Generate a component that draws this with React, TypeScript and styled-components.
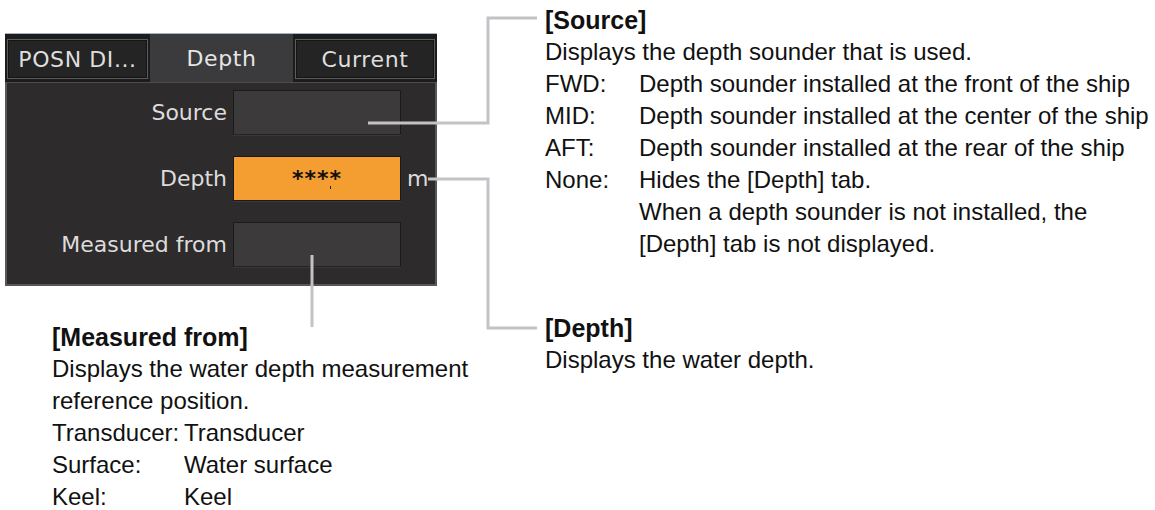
import React from "react";
import styled, { createGlobalStyle } from "styled-components";

const GlobalStyle = createGlobalStyle`
  * { box-sizing: border-box; }
  html, body { margin: 0; padding: 0; background: #ffffff; }
  body { font-family: "Liberation Sans", Arial, sans-serif; color: #111111; }
`;

const Page = styled.div`
  position: relative;
  width: 1155px;
  height: 510px;
  display: flex;
  padding-left: 5px;
  overflow: hidden;
`;

const LeftColumn = styled.div`
  width: 432px;
  display: flex;
  flex-direction: column;
`;

const RightColumn = styled.div`
  margin-left: 108px;
  padding-top: 4px;
  display: flex;
  flex-direction: column;
`;

/* ---------- dark ECDIS panel ---------- */

const Panel = styled.div`
  margin-top: 33px;
  border-top: 1px solid #a6b4c2;
  background: #1d1c1d;
  font-family: "DejaVu Sans", Verdana, sans-serif;
  font-size: 22px;
  color: #dcdcdc;
`;

const TabBar = styled.div`
  height: 48px;
  display: grid;
  grid-template-columns: 145px 143px 144px;
`;

const Tab = styled.div<{ $active?: boolean }>`
  display: flex;
  align-items: center;
  justify-content: center;
  letter-spacing: 0.6px;
  white-space: nowrap;
  ${({ $active }) =>
    $active
      ? `
    background: #3b3a3c;
    color: #e6e6e6;
  `
      : `
    margin: 5px 2px 3px;
    background: #252425;
    border: 1px solid #5c5c5c;
    box-shadow: inset 0 0 0 1px #141414;
    color: #dedede;
  `}
`;

const Body = styled.div`
  height: 204px;
  background: #2d2b2c;
  border: 2px solid #575757;
  border-top: 1px solid #4d4d4d;
  padding: 7px 0 0 0;
  display: grid;
  grid-template-columns: 220px 168px auto;
  grid-auto-rows: 45px;
  column-gap: 6px;
  row-gap: 21px;
  align-items: center;
`;

const FieldLabel = styled.div`
  text-align: right;
  white-space: nowrap;
`;

const Field = styled.div<{ $highlight?: boolean }>`
  position: relative;
  height: 45px;
  display: flex;
  align-items: center;
  justify-content: center;
  background: ${({ $highlight }) => ($highlight ? "#f49d30" : "#3c3a3b")};
  border: 1px solid #1b1a1b;
  border-bottom-color: ${({ $highlight }) => ($highlight ? "#1b1a1b" : "#242324")};
  box-shadow: 0 1px 0 #3a393a;
  color: #111111;
  font-weight: bold;
  letter-spacing: 1px;
`;

const Mark = styled.span`
  position: absolute;
  left: 96px;
  top: 29px;
  width: 1px;
  height: 3px;
  background: #222222;
`;

const Unit = styled.div`
  color: #dcdcdc;
  padding-left: 0;
`;

/* ---------- annotation texts ---------- */

const Note = styled.div<{ $indent?: number }>`
  padding-left: ${({ $indent }) => $indent ?? 0}px;
  font-size: 24px;
  line-height: 32px;
  white-space: nowrap;
`;

const NoteTitle = styled.div`
  font-size: 25px;
  font-weight: bold;
  line-height: 32px;
`;

const DefList = styled.div<{ $labelWidth: number }>`
  display: grid;
  grid-template-columns: ${({ $labelWidth }) => $labelWidth}px auto;
`;

const Leaders = styled.svg`
  position: absolute;
  left: 0;
  top: 0;
  pointer-events: none;
`;

const SourceNote = styled(Note)``;

const DepthNote = styled(Note)`
  margin-top: 52px;
`;

const MeasuredNote = styled(Note)`
  margin-top: 35px;
`;

const App: React.FC = () => {
  return (
    <>
      <GlobalStyle />
      <Page>
        <LeftColumn>
          <Panel>
            <TabBar>
              <Tab>POSN DI...</Tab>
              <Tab $active>Depth</Tab>
              <Tab>Current</Tab>
            </TabBar>
            <Body>
              <FieldLabel>Source</FieldLabel>
              <Field />
              <Unit />
              <FieldLabel>Depth</FieldLabel>
              <Field $highlight>
                ****
                <Mark />
              </Field>
              <Unit>m</Unit>
              <FieldLabel>Measured from</FieldLabel>
              <Field />
              <Unit />
            </Body>
          </Panel>

          <MeasuredNote $indent={47}>
            <NoteTitle>[Measured from]</NoteTitle>
            <div>Displays the water depth measurement</div>
            <div>reference position.</div>
            <DefList $labelWidth={132}>
              <span>Transducer:</span>
              <span>Transducer</span>
              <span>Surface:</span>
              <span>Water surface</span>
              <span>Keel:</span>
              <span>Keel</span>
            </DefList>
          </MeasuredNote>
        </LeftColumn>

        <RightColumn>
          <SourceNote>
            <NoteTitle>[Source]</NoteTitle>
            <div>Displays the depth sounder that is used.</div>
            <DefList $labelWidth={94}>
              <span>FWD:</span>
              <span>Depth sounder installed at the front of the ship</span>
              <span>MID:</span>
              <span>Depth sounder installed at the center of the ship</span>
              <span>AFT:</span>
              <span>Depth sounder installed at the rear of the ship</span>
              <span>None:</span>
              <span>
                Hides the [Depth] tab.
                <br />
                When a depth sounder is not installed, the
                <br />
                [Depth] tab is not displayed.
              </span>
            </DefList>
          </SourceNote>

          <DepthNote>
            <NoteTitle>[Depth]</NoteTitle>
            <div>Displays the water depth.</div>
          </DepthNote>
        </RightColumn>

        <Leaders width={1155} height={510} viewBox="0 0 1155 510">
          <g fill="none" stroke="#c3c3c7" strokeWidth={3}>
            <polyline points="368,123 488,123 488,18 537,18" />
            <polyline points="428,179 488,179 488,328 537,328" />
            <line x1={312} y1={255} x2={312} y2={327} />
          </g>
        </Leaders>
      </Page>
    </>
  );
};

export default App;
